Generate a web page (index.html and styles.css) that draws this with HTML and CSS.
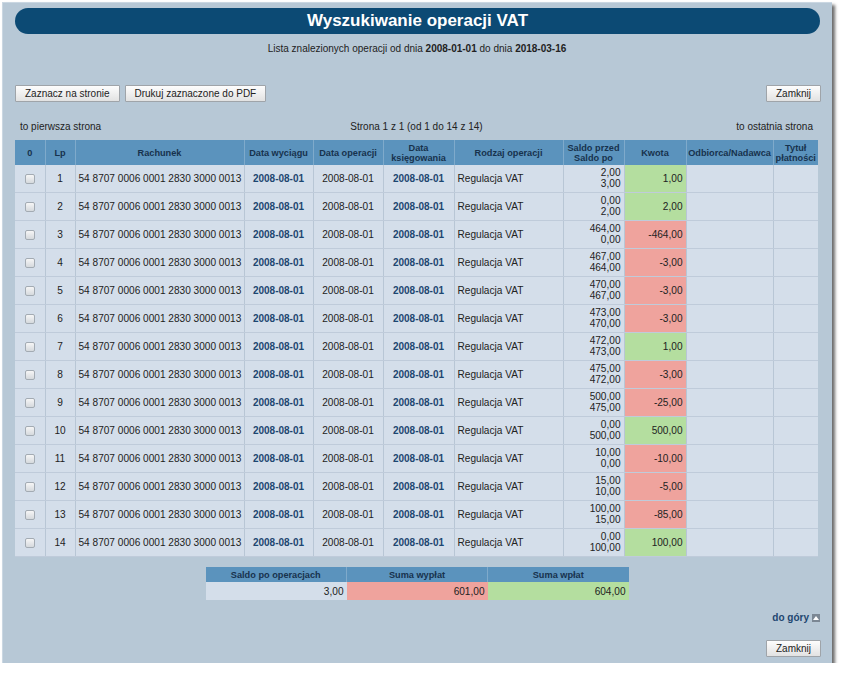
FILE: index.html
```html
<!DOCTYPE html>
<html lang="pl">
<head>
<meta charset="utf-8">
<title>Wyszukiwanie operacji VAT</title>
<link rel="stylesheet" href="styles.css">
</head>
<body>
<div class="panel">
  <div class="title">Wyszukiwanie operacji VAT</div>
  <div class="content">
    <p class="subtitle">Lista znalezionych operacji od dnia <b>2008-01-01</b> do dnia <b>2018-03-16</b></p>
    <div class="toolbar">
      <div class="btn-group">
        <button class="btn">Zaznacz na stronie</button>
        <button class="btn">Drukuj zaznaczone do PDF</button>
      </div>
      <button class="btn">Zamknij</button>
    </div>
    <div class="pager">
      <span class="pager-left">to pierwsza strona</span>
      <span class="pager-mid">Strona 1 z 1 (od 1 do 14 z 14)</span>
      <span class="pager-right">to ostatnia strona</span>
    </div>
    <table class="ops">
      <colgroup>
        <col class="c-chk"><col class="c-lp"><col class="c-acc"><col class="c-d1"><col class="c-d2"><col class="c-d3"><col class="c-type"><col class="c-saldo"><col class="c-amt"><col class="c-who"><col class="c-tit">
      </colgroup>
      <thead>
        <tr>
          <th>0</th><th>Lp</th><th>Rachunek</th><th>Data wyciągu</th><th>Data operacji</th><th>Data księgowania</th><th>Rodzaj operacji</th><th>Saldo przed<br>Saldo po</th><th>Kwota</th><th>Odbiorca/Nadawca</th><th>Tytuł płatności</th>
        </tr>
      </thead>
      <tbody>
        <tr><td class="chk"><input type="checkbox"></td><td class="lp">1</td><td class="acc">54 8707 0006 0001 2830 3000 0013</td><td class="date"><a>2008-08-01</a></td><td class="date">2008-08-01</td><td class="date"><a>2008-08-01</a></td><td class="type">Regulacja VAT</td><td class="saldo">2,00<br>3,00</td><td class="amt plus">1,00</td><td></td><td></td></tr>
        <tr><td class="chk"><input type="checkbox"></td><td class="lp">2</td><td class="acc">54 8707 0006 0001 2830 3000 0013</td><td class="date"><a>2008-08-01</a></td><td class="date">2008-08-01</td><td class="date"><a>2008-08-01</a></td><td class="type">Regulacja VAT</td><td class="saldo">0,00<br>2,00</td><td class="amt plus">2,00</td><td></td><td></td></tr>
        <tr><td class="chk"><input type="checkbox"></td><td class="lp">3</td><td class="acc">54 8707 0006 0001 2830 3000 0013</td><td class="date"><a>2008-08-01</a></td><td class="date">2008-08-01</td><td class="date"><a>2008-08-01</a></td><td class="type">Regulacja VAT</td><td class="saldo">464,00<br>0,00</td><td class="amt minus">-464,00</td><td></td><td></td></tr>
        <tr><td class="chk"><input type="checkbox"></td><td class="lp">4</td><td class="acc">54 8707 0006 0001 2830 3000 0013</td><td class="date"><a>2008-08-01</a></td><td class="date">2008-08-01</td><td class="date"><a>2008-08-01</a></td><td class="type">Regulacja VAT</td><td class="saldo">467,00<br>464,00</td><td class="amt minus">-3,00</td><td></td><td></td></tr>
        <tr><td class="chk"><input type="checkbox"></td><td class="lp">5</td><td class="acc">54 8707 0006 0001 2830 3000 0013</td><td class="date"><a>2008-08-01</a></td><td class="date">2008-08-01</td><td class="date"><a>2008-08-01</a></td><td class="type">Regulacja VAT</td><td class="saldo">470,00<br>467,00</td><td class="amt minus">-3,00</td><td></td><td></td></tr>
        <tr><td class="chk"><input type="checkbox"></td><td class="lp">6</td><td class="acc">54 8707 0006 0001 2830 3000 0013</td><td class="date"><a>2008-08-01</a></td><td class="date">2008-08-01</td><td class="date"><a>2008-08-01</a></td><td class="type">Regulacja VAT</td><td class="saldo">473,00<br>470,00</td><td class="amt minus">-3,00</td><td></td><td></td></tr>
        <tr><td class="chk"><input type="checkbox"></td><td class="lp">7</td><td class="acc">54 8707 0006 0001 2830 3000 0013</td><td class="date"><a>2008-08-01</a></td><td class="date">2008-08-01</td><td class="date"><a>2008-08-01</a></td><td class="type">Regulacja VAT</td><td class="saldo">472,00<br>473,00</td><td class="amt plus">1,00</td><td></td><td></td></tr>
        <tr><td class="chk"><input type="checkbox"></td><td class="lp">8</td><td class="acc">54 8707 0006 0001 2830 3000 0013</td><td class="date"><a>2008-08-01</a></td><td class="date">2008-08-01</td><td class="date"><a>2008-08-01</a></td><td class="type">Regulacja VAT</td><td class="saldo">475,00<br>472,00</td><td class="amt minus">-3,00</td><td></td><td></td></tr>
        <tr><td class="chk"><input type="checkbox"></td><td class="lp">9</td><td class="acc">54 8707 0006 0001 2830 3000 0013</td><td class="date"><a>2008-08-01</a></td><td class="date">2008-08-01</td><td class="date"><a>2008-08-01</a></td><td class="type">Regulacja VAT</td><td class="saldo">500,00<br>475,00</td><td class="amt minus">-25,00</td><td></td><td></td></tr>
        <tr><td class="chk"><input type="checkbox"></td><td class="lp">10</td><td class="acc">54 8707 0006 0001 2830 3000 0013</td><td class="date"><a>2008-08-01</a></td><td class="date">2008-08-01</td><td class="date"><a>2008-08-01</a></td><td class="type">Regulacja VAT</td><td class="saldo">0,00<br>500,00</td><td class="amt plus">500,00</td><td></td><td></td></tr>
        <tr><td class="chk"><input type="checkbox"></td><td class="lp">11</td><td class="acc">54 8707 0006 0001 2830 3000 0013</td><td class="date"><a>2008-08-01</a></td><td class="date">2008-08-01</td><td class="date"><a>2008-08-01</a></td><td class="type">Regulacja VAT</td><td class="saldo">10,00<br>0,00</td><td class="amt minus">-10,00</td><td></td><td></td></tr>
        <tr><td class="chk"><input type="checkbox"></td><td class="lp">12</td><td class="acc">54 8707 0006 0001 2830 3000 0013</td><td class="date"><a>2008-08-01</a></td><td class="date">2008-08-01</td><td class="date"><a>2008-08-01</a></td><td class="type">Regulacja VAT</td><td class="saldo">15,00<br>10,00</td><td class="amt minus">-5,00</td><td></td><td></td></tr>
        <tr><td class="chk"><input type="checkbox"></td><td class="lp">13</td><td class="acc">54 8707 0006 0001 2830 3000 0013</td><td class="date"><a>2008-08-01</a></td><td class="date">2008-08-01</td><td class="date"><a>2008-08-01</a></td><td class="type">Regulacja VAT</td><td class="saldo">100,00<br>15,00</td><td class="amt minus">-85,00</td><td></td><td></td></tr>
        <tr><td class="chk"><input type="checkbox"></td><td class="lp">14</td><td class="acc">54 8707 0006 0001 2830 3000 0013</td><td class="date"><a>2008-08-01</a></td><td class="date">2008-08-01</td><td class="date"><a>2008-08-01</a></td><td class="type">Regulacja VAT</td><td class="saldo">0,00<br>100,00</td><td class="amt plus">100,00</td><td></td><td></td></tr>
      </tbody>
    </table>
    <table class="summary">
      <thead>
        <tr><th>Saldo po operacjach</th><th>Suma wypłat</th><th>Suma wpłat</th></tr>
      </thead>
      <tbody>
        <tr><td>3,00</td><td class="minus">601,00</td><td class="plus">604,00</td></tr>
      </tbody>
    </table>
    <div class="top-link"><a>do góry</a><span class="up-icon"><svg width="8" height="8" viewBox="0 0 8 8"><rect width="8" height="8" fill="#7b8794"/><polygon points="4,2 7,6 1,6" fill="#ffffff"/></svg></span></div>
    <div class="footer"><button class="btn">Zamknij</button></div>
  </div>
</div>
</body>
</html>
```
FILE: styles.css
```css
html, body {
  margin: 0;
  padding: 0;
  background: #ffffff;
}

body {
  font-family: "Liberation Sans", Arial, sans-serif;
  color: #222222;
}

.panel {
  box-sizing: border-box;
  margin: 2px 0 0 2px;
  width: 830px;
  height: 661px;
  padding: 5px 12px 0 12px;
  background: #b7c8d6;
  border-top: 1px solid #cad7e2;
  border-left: 1px solid #cad7e2;
  box-shadow: 3px 3px 3px rgba(60, 60, 60, 0.75);
}

.title {
  height: 26px;
  border-radius: 13px;
  background: #0c4a74;
  color: #ffffff;
  font-weight: bold;
  font-size: 17px;
  line-height: 26px;
  text-align: center;
}

.content {
  padding: 0 1px 0 0;
}

.subtitle {
  margin: 9px 0 0 0;
  font-size: 10px;
  line-height: 12px;
  text-align: center;
}

.toolbar {
  display: flex;
  justify-content: space-between;
  align-items: center;
  margin: 30px -2px 0 0;
}

.btn-group {
  display: flex;
  gap: 5px;
}

.btn {
  box-sizing: border-box;
  height: 17px;
  padding: 0 9px;
  border: 1px solid #9fa4a9;
  border-radius: 1px;
  background: linear-gradient(#fdfdfd, #e2e2e2);
  font-family: "Liberation Sans", Arial, sans-serif;
  font-size: 10px;
  line-height: 15px;
  color: #222222;
}

.pager {
  display: grid;
  grid-template-columns: 1fr auto 1fr;
  margin: 19px 0 0 0;
  padding: 0 6px 0 5px;
  font-size: 10px;
  line-height: 12px;
}

.pager-right {
  text-align: right;
}

.ops {
  margin-top: 7px;
  width: 803px;
  border-collapse: collapse;
  table-layout: fixed;
}

.c-chk { width: 30px; }
.c-lp { width: 30px; }
.c-acc { width: 169px; }
.c-d1 { width: 69px; }
.c-d2 { width: 70px; }
.c-d3 { width: 71px; }
.c-type { width: 109px; }
.c-saldo { width: 61px; }
.c-amt { width: 62px; }
.c-who { width: 87px; }
.c-tit { width: 45px; }

.ops th {
  height: 25px;
  padding: 0 1px;
  background: #5b93bd;
  color: #17324d;
  font-size: 9.2px;
  font-weight: bold;
  line-height: 10px;
  text-align: center;
  border-right: 1px solid #7faacb;
}

.ops td {
  height: 27px;
  padding: 0 3px;
  background: #d4deea;
  font-size: 10.1px;
  line-height: 11px;
  white-space: nowrap;
  overflow: hidden;
  border-right: 1px solid #b8c6d5;
  border-bottom: 1px solid #bfcbda;
}

.ops th:last-child,
.ops td:last-child {
  border-right: none;
}

.ops td.chk,
.ops td.lp,
.ops td.date {
  text-align: center;
}

.ops td.saldo,
.ops td.amt {
  text-align: right;
}

.ops td.saldo {
  line-height: 10.5px;
}

.ops td.date a {
  color: #1d4670;
  font-weight: bold;
  font-size: 10px;
}

.chk input {
  appearance: none;
  -webkit-appearance: none;
  box-sizing: border-box;
  width: 10px;
  height: 10px;
  margin: 0;
  border: 1px solid #a3abb3;
  border-radius: 2px;
  background: linear-gradient(#f6f6f6, #d5d9dd);
  vertical-align: middle;
}

.ops td.plus,
.summary td.plus {
  background: #b4de9f;
}

.ops td.minus,
.summary td.minus {
  background: #efa39d;
}

.summary {
  margin: 10px auto 0 auto;
  width: 423px;
  border-collapse: collapse;
  table-layout: fixed;
}

.summary th {
  height: 15px;
  padding: 0;
  background: #5b93bd;
  color: #17324d;
  font-size: 9.2px;
  font-weight: bold;
  line-height: 10px;
  text-align: center;
  border-right: 1px solid #7faacb;
}

.summary td {
  height: 18px;
  padding: 0 3px;
  background: #d4deea;
  font-size: 10.1px;
  text-align: right;
}

.summary th:last-child {
  border-right: none;
}

.top-link {
  display: flex;
  justify-content: flex-end;
  align-items: center;
  gap: 3px;
  margin: 12px -1px 0 0;
  height: 12px;
}

.top-link a {
  color: #1d4670;
  font-weight: bold;
  font-size: 10px;
  line-height: 12px;
}

.up-icon {
  display: flex;
  width: 8px;
  height: 8px;
}

.footer {
  display: flex;
  justify-content: flex-end;
  margin: 16px -2px 0 0;
}
```
